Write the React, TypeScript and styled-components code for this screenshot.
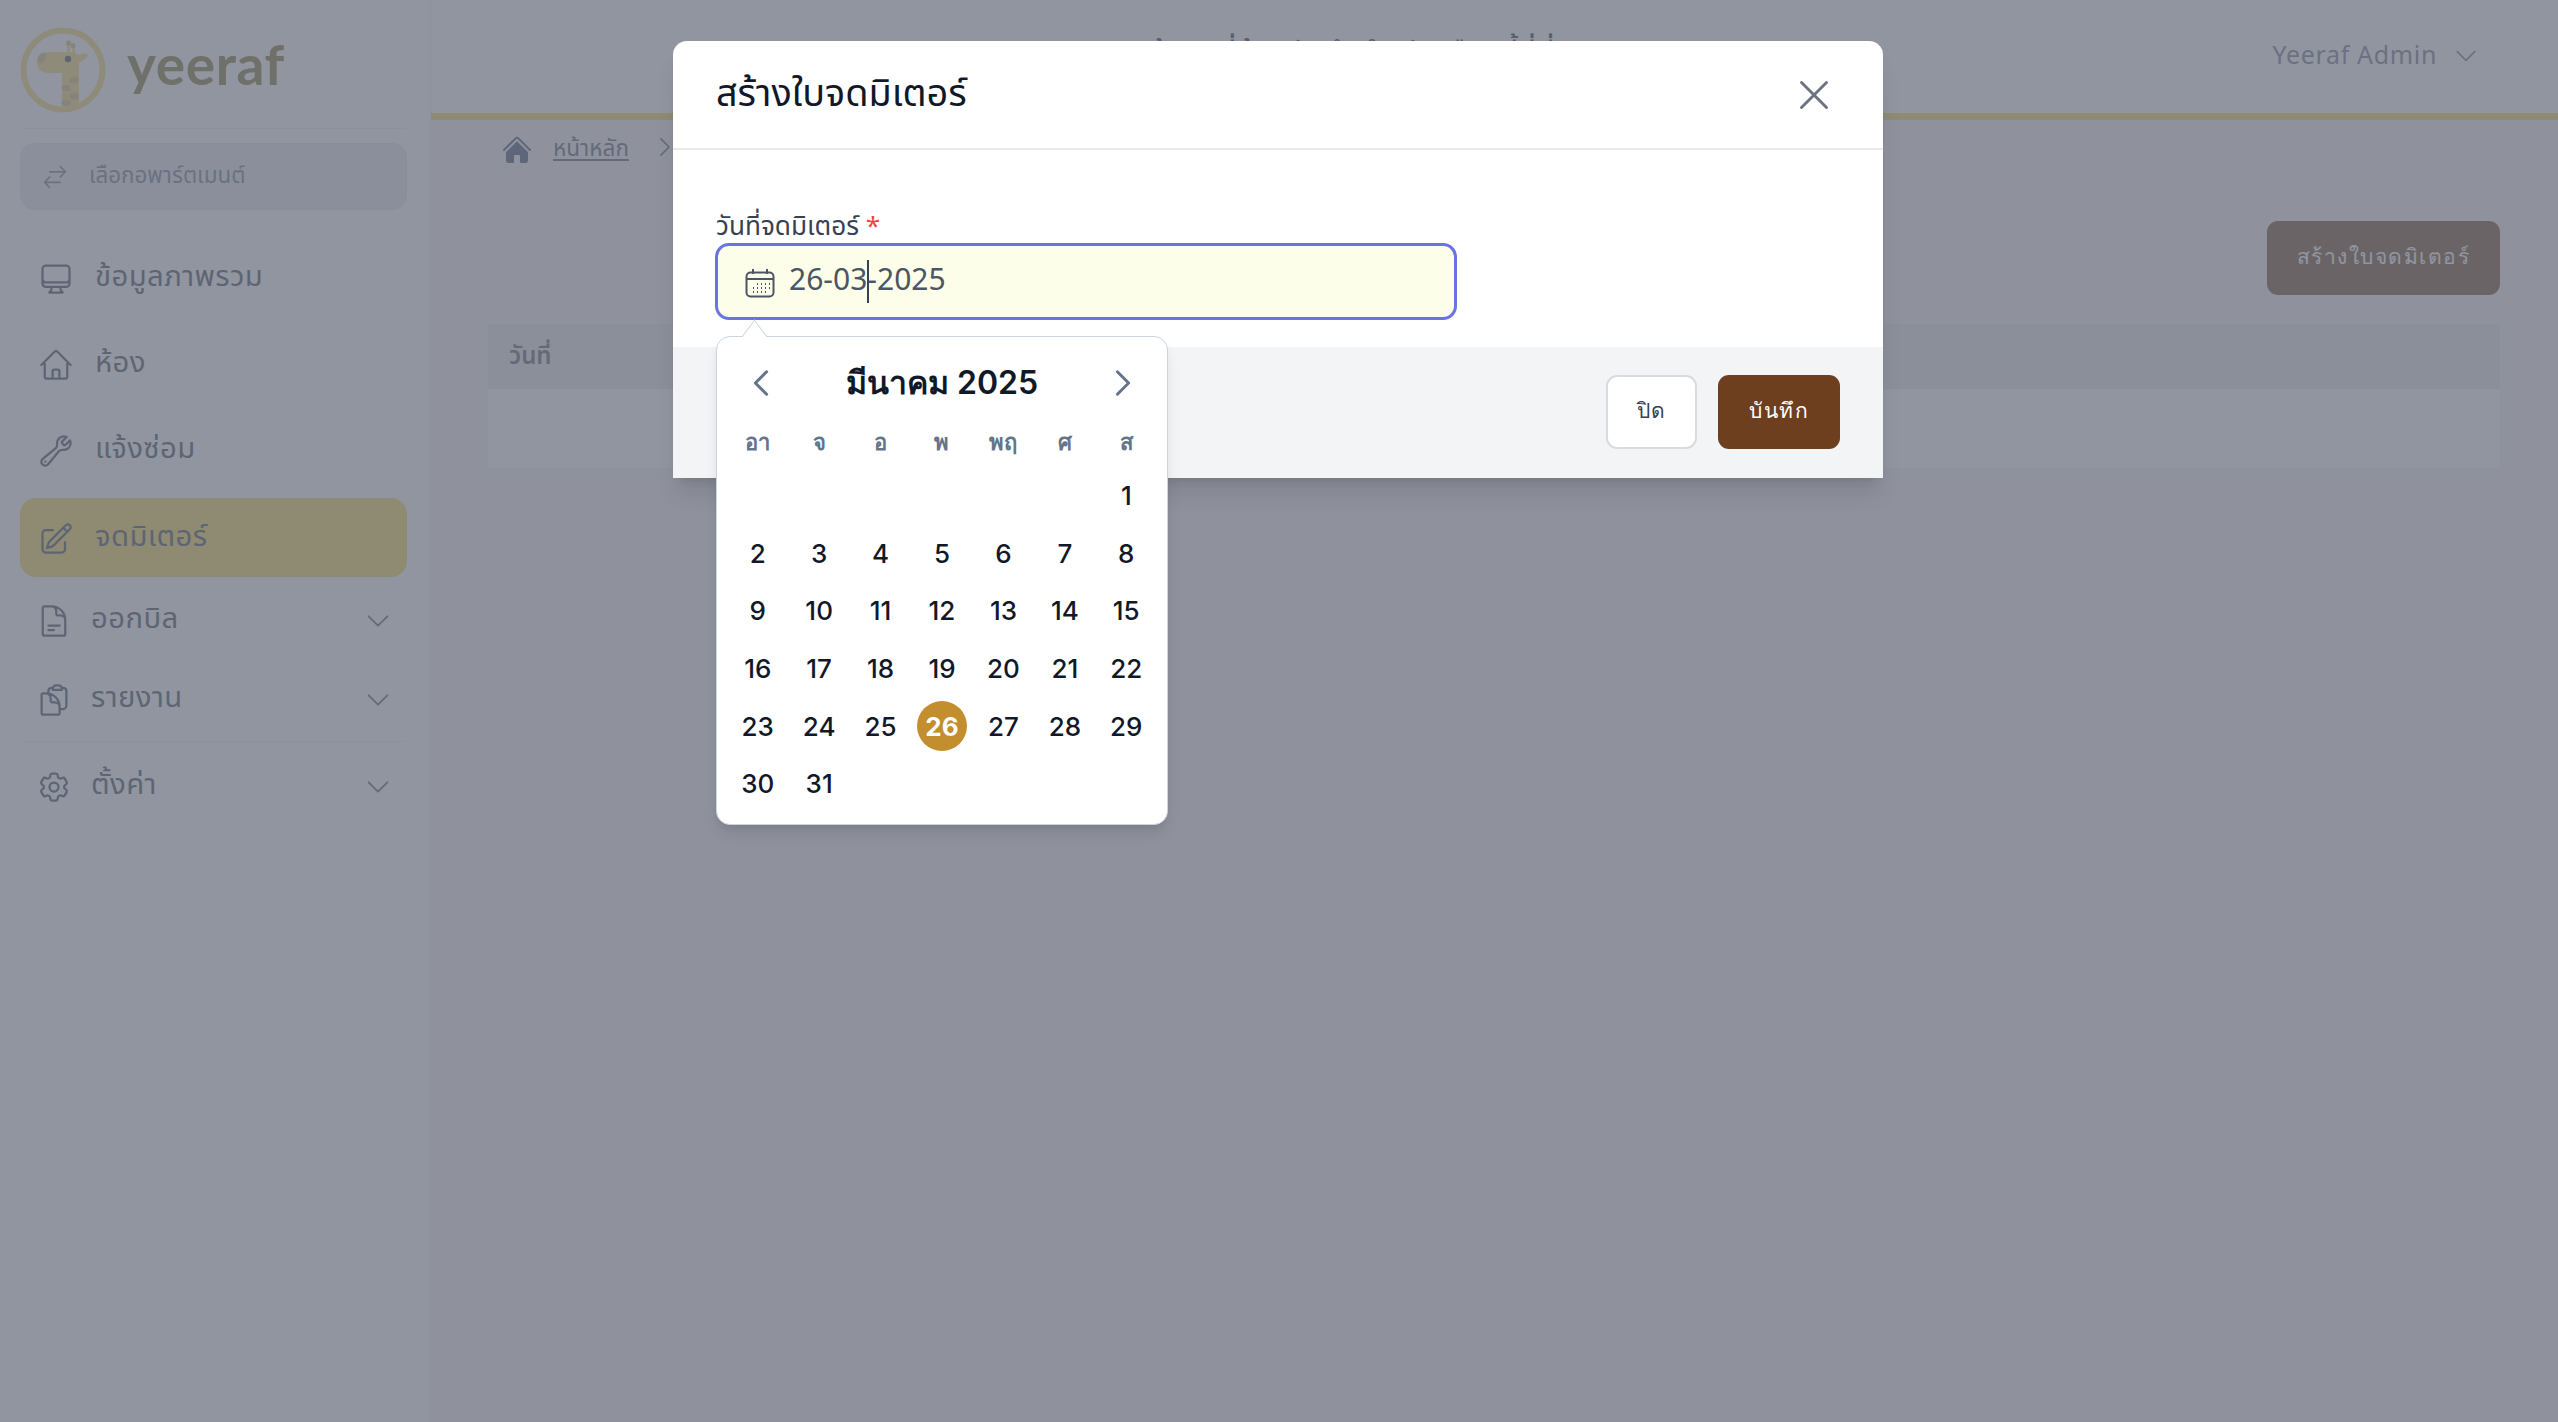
import React from "react";
import styled, { createGlobalStyle } from "styled-components";
import {
  HiOutlineComputerDesktop,
  HiOutlineHome,
  HiOutlineWrench,
  HiOutlinePencilSquare,
  HiOutlineDocumentText,
  HiOutlineClipboardDocument,
  HiOutlineCog6Tooth,
  HiOutlineChevronDown,
  HiOutlineArrowsRightLeft,
  HiHome,
  HiOutlineXMark,
  HiOutlineChevronLeft,
  HiOutlineChevronRight,
} from "react-icons/hi2";

const Global = createGlobalStyle`
  html, body { margin: 0; height: 100%; overflow: hidden; background: #fcf1f3; }
  * { box-sizing: border-box; }
  body { font-family: "Noto Sans", "Noto Sans Thai", sans-serif; color: #374151; }
`;

const Page = styled.div`
  display: flex;
  width: 2558px;
  height: 1422px;
  position: relative;
`;
const Sidebar = styled.aside`
  width: 431px;
  flex: none;
  background: #fff;
  border-right: 1px solid #f1eef0;
  padding: 0 23px 0 20px;
  display: flex;
  flex-direction: column;
`;
const LogoRow = styled.div`
  height: 129px;
  padding-top: 27px;
  display: flex;
  align-items: flex-start;
  gap: 21px;
  border-bottom: 1px solid #eef0f3;
`;
const LogoText = styled.div`
  font-family: "Lato", sans-serif;
  font-weight: 700;
  font-size: 55px;
  line-height: 68px;
  letter-spacing: 0.6px;
  padding-top: 3px;
  color: #7c6c26;
`;
const SelectBox = styled.div`
  margin-top: 14px;
  height: 67px;
  border: 1px solid #dfe2e8;
  border-radius: 14px;
  background: #e6e8ec;
  display: flex;
  align-items: center;
  gap: 20px;
  padding: 0 0 2px 20px;
  font-size: 22.4px;
  color: #6b7280;
  svg { width: 28px; height: 28px; margin-top: 2px; }
`;
const Nav = styled.nav`
  margin-top: 25px;
  display: flex;
  flex-direction: column;
`;
const Item = styled.div<{ $h: number; $mt?: number; $active?: boolean; $gap: number; $pl: number }>`
  height: ${(p) => p.$h}px;
  margin-top: ${(p) => p.$mt ?? 0}px;
  display: flex;
  align-items: center;
  gap: ${(p) => p.$gap}px;
  padding: 0 14px 0 ${(p) => p.$pl}px;
  border-radius: 16px;
  background: ${(p) => (p.$active ? "#fcd248" : "transparent")};
  font-size: 29.3px;
  color: #374151;
  letter-spacing: 0.4px;
  > svg:first-child { width: 36px; height: 36px; flex: none; margin-top: 2px; }
`;
const ItemLabel = styled.span`
  flex: 1;
  line-height: 1;
  position: relative;
  top: -2px;
`;
const Caret = styled(HiOutlineChevronDown)`
  width: 30px;
  height: 30px;
  margin-top: 2px;
  color: #4b5563;
`;
const NavDivider = styled.div`
  height: 1px;
  margin: 3px 0 5px;
  background: #eef0f3;
`;

const Main = styled.div`
  flex: 1;
  display: flex;
  flex-direction: column;
`;
const Header = styled.header`
  height: 120px;
  background: #fff;
  border-bottom: 7px solid #fcd248;
  display: flex;
  justify-content: flex-end;
  padding: 32px 78px 0 0;
  position: relative;
`;
const PeekTitle = styled.div`
  position: absolute;
  left: 720px;
  top: 32px;
  font-size: 27px;
  font-weight: 600;
  letter-spacing: 1px;
  white-space: nowrap;
  color: #1f2937;
`;
const UserMenu = styled.div`
  display: flex;
  align-items: flex-start;
  gap: 15px;
  font-size: 25px;
  line-height: 44px;
  letter-spacing: 0.65px;
  color: #6b7280;
  svg { width: 28px; height: 28px; margin-top: 10px; }
`;
const Crumbs = styled.div`
  height: 56px;
  padding: 12px 0 0 70px;
  display: flex;
  align-items: flex-start;
  gap: 20px;
  font-size: 22.6px;
  line-height: 32px;
  color: #4b5563;
  > svg { width: 32px; height: 32px; margin-top: 2px; color: #374a63; }
`;
const CrumbLink = styled.span`
  text-decoration: underline;
  text-underline-offset: 3px;
`;
const CrumbSep = styled(HiOutlineChevronRight)`
  width: 26px;
  height: 26px !important;
  margin: 5px 0 0 0;
  color: #4b5563 !important;
`;
const Toolbar = styled.div`
  display: flex;
  justify-content: flex-end;
  padding: 45px 58px 0 0;
`;
const PrimaryButton = styled.button`
  width: 233px;
  height: 74px;
  border: 0;
  border-radius: 11px;
  background: #6e3f1e;
  color: #fff;
  font: 500 21px "Noto Sans", sans-serif;
  letter-spacing: 1.5px;
  padding: 0 0 4px;
`;
const TableWrap = styled.div`
  margin: 29px 58px 0 57px;
`;
const TableHead = styled.div`
  height: 65px;
  background: #eae7e1;
  padding: 9px 21px 0;
  font-size: 24px;
  font-weight: 600;
  line-height: 44px;
  color: #4b5563;
`;
const TableRow = styled.div`
  height: 79px;
  background: #fff;
`;

const Overlay = styled.div`
  position: absolute;
  inset: 0;
  background: rgba(107, 114, 128, 0.75);
  display: flex;
  justify-content: center;
  align-items: flex-start;
  padding: 41px 2px 0 0;
`;
const Modal = styled.div`
  width: 1210px;
  height: 437px;
  border-radius: 14px 14px 0 0;
  background: #fff;
  box-shadow: 0 20px 25px -5px rgba(0, 0, 0, 0.1), 0 8px 10px -6px rgba(0, 0, 0, 0.1);
  display: flex;
  flex-direction: column;
`;
const ModalHeader = styled.div`
  height: 109px;
  flex: none;
  border-bottom: 2px solid #e9eaec;
  padding: 0 42px 0 43px;
  display: flex;
  align-items: center;
  justify-content: space-between;
  font-size: 37.8px;
  color: #111827;
  svg { width: 50px; height: 50px; color: #6b7280; margin: 0 2px 0 0; stroke-width: 1.4; }
`;
const ModalBody = styled.div`
  height: 197px;
  flex: none;
  padding: 53px 0 0 42px;
`;
const Field = styled.div`
  width: 742px;
  position: relative;
`;
const Label = styled.label`
  display: block;
  height: 40px;
  padding-left: 1px;
  font-size: 26.2px;
  line-height: 44px;
  color: #374151;
`;
const Star = styled.span`
  color: #ef4444;
`;
const DateInput = styled.div`
  height: 77px;
  border: 3px solid #6a73e6;
  border-radius: 14px;
  background: #fdfeea;
  display: flex;
  align-items: center;
  gap: 14px;
  padding: 0 0 0 27px;
  font-size: 30px;
  color: #4b5563;
  svg { margin-top: 2px; }
`;
const DateText = styled.span`
  position: relative;
  top: -1px;
`;
const TextCaret = styled.span`
  display: inline-block;
  width: 2px;
  height: 43px;
  margin: 0 -2px 0 0;
  background: #374151;
  vertical-align: middle;
`;
const Popover = styled.div`
  position: absolute;
  left: 1px;
  top: 133px;
  width: 452px;
  height: 489px;
  background: #fff;
  border: 1px solid #cbd5e1;
  border-radius: 14px;
  box-shadow: 0 10px 15px -3px rgba(0, 0, 0, 0.1), 0 4px 6px -2px rgba(0, 0, 0, 0.05);
  padding: 0 10px;
  z-index: 2;
  &::before {
    content: "";
    position: absolute;
    left: 27px;
    top: -11px;
    width: 20px;
    height: 20px;
    background: #fff;
    border-left: 1px solid #cbd5e1;
    border-top: 1px solid #cbd5e1;
    transform: rotate(45deg) skew(8deg, 8deg);
  }
`;
const CalHead = styled.div`
  height: 80px;
  padding: 11px 16px 0;
  display: flex;
  align-items: center;
  justify-content: space-between;
  font-family: "Inter", "Noto Sans", sans-serif;
  font-weight: 600;
  font-size: 32px;
  color: #111827;
  svg { width: 36px; height: 36px; color: #64748b; stroke-width: 2; }
`;
const Grid = styled.div`
  display: grid;
  grid-template-columns: repeat(7, 1fr);
  font-family: "Inter", "Noto Sans", sans-serif;
`;
const DayName = styled.div`
  height: 50px;
  display: flex;
  align-items: center;
  justify-content: center;
  font-size: 22px;
  font-weight: 600;
  color: #64748b;
`;
const Day = styled.div`
  height: 57.6px;
  display: flex;
  align-items: center;
  justify-content: center;
  font-size: 26px;
  font-weight: 450;
  color: #111827;
`;
const Selected = styled.span`
  width: 50px;
  height: 50px;
  border-radius: 50%;
  background: #c28e2e;
  color: #fff;
  font-weight: 700;
  display: flex;
  align-items: center;
  justify-content: center;
`;
const ModalFooter = styled.div`
  flex: 1;
  background: #f3f4f6;
  display: flex;
  justify-content: flex-end;
  gap: 21px;
  padding: 28px 43px 0 0;
`;
const FooterButton = styled.button<{ $primary?: boolean }>`
  width: ${(p) => (p.$primary ? 122 : 91)}px;
  height: 74px;
  border-radius: 11px;
  border: ${(p) => (p.$primary ? "0" : "2px solid #d8dbe0")};
  background: ${(p) => (p.$primary ? "#6e3f1e" : "#fff")};
  color: ${(p) => (p.$primary ? "#fff" : "#374151")};
  font: 500 21px "Noto Sans", sans-serif;
  letter-spacing: 1.5px;
  padding: 0 0 3px;
`;

const Logo = () => (
  <svg width="86" height="86" viewBox="0 0 86 86">
    <circle cx="43" cy="43" r="39.5" fill="none" stroke="#f6d66a" strokeWidth="6" />
    <path
      d="M17 35c0-6 5-10 12-10h16c4 0 10 1 14 3 3-1 6-2 9-1 0 3-4 7-9 8v43c-5 2-12 2-17 1V46H29c-7 0-12-4-12-11Z"
      fill="#f6d66a"
    />
    <path d="M49 26l-1-9M54 27l-1-8" stroke="#f6d66a" strokeWidth="2.5" />
    <circle cx="48.5" cy="16" r="2.6" fill="#d9b46f" />
    <circle cx="53" cy="18.5" r="2.6" fill="#d9b46f" />
    <ellipse cx="22" cy="31" rx="3.8" ry="5.8" transform="rotate(28 22 31)" fill="#d9b46f" />
    <circle cx="48" cy="32" r="3.2" fill="#374151" />
    <ellipse cx="54" cy="53" rx="4.6" ry="3.3" transform="rotate(-10 54 53)" fill="#d9b46f" />
    <ellipse cx="46" cy="61" rx="4.6" ry="3.3" transform="rotate(10 46 61)" fill="#d9b46f" />
    <ellipse cx="54" cy="69" rx="4.6" ry="3.3" transform="rotate(-10 54 69)" fill="#d9b46f" />
    <ellipse cx="46" cy="76" rx="4.8" ry="3.3" fill="#d9b46f" />
  </svg>
);

const CalendarIcon = () => (
  <svg width="30" height="30" viewBox="0 0 30 30" fill="none" stroke="#4b5563" strokeWidth="2">
    <rect x="1.5" y="4.5" width="27" height="24" rx="4" />
    <path d="M1.5 11h27M8 1v5M22 1v5" />
    <path
      d="M12 16h1M16 16h1M20 16h1M24 16h1M8 20h1M12 20h1M16 20h1M20 20h1M24 20h1M8 24h1M12 24h1M16 24h1M20 24h1"
      strokeWidth="1.8"
    />
  </svg>
);

const dayNames = ["อา", "จ", "อ", "พ", "พฤ", "ศ", "ส"];
const blanks = Array.from({ length: 6 });
const days = Array.from({ length: 31 }, (_, i) => i + 1);

export default function App() {
  return (
    <Page>
      <Global />
      <Sidebar>
        <LogoRow>
          <Logo />
          <LogoText>yeeraf</LogoText>
        </LogoRow>
        <SelectBox>
          <HiOutlineArrowsRightLeft />
          เลือกอพาร์ตเมนต์
        </SelectBox>
        <Nav>
          <Item $h={86} $gap={21} $pl={18}>
            <HiOutlineComputerDesktop />
            <ItemLabel>ข้อมูลภาพรวม</ItemLabel>
          </Item>
          <Item $h={86} $gap={21} $pl={18}>
            <HiOutlineHome />
            <ItemLabel>ห้อง</ItemLabel>
          </Item>
          <Item $h={86} $gap={21} $pl={18}>
            <HiOutlineWrench />
            <ItemLabel>แจ้งซ่อม</ItemLabel>
          </Item>
          <Item $h={79} $mt={5} $gap={21} $pl={18} $active>
            <HiOutlinePencilSquare />
            <ItemLabel>จดมิเตอร์</ItemLabel>
          </Item>
          <Item $h={78} $mt={4} $gap={19} $pl={16}>
            <HiOutlineDocumentText />
            <ItemLabel>ออกบิล</ItemLabel>
            <Caret />
          </Item>
          <Item $h={78} $mt={1} $gap={19} $pl={16}>
            <HiOutlineClipboardDocument />
            <ItemLabel>รายงาน</ItemLabel>
            <Caret />
          </Item>
          <NavDivider />
          <Item $h={78} $gap={19} $pl={16}>
            <HiOutlineCog6Tooth />
            <ItemLabel>ตั้งค่า</ItemLabel>
            <Caret />
          </Item>
        </Nav>
      </Sidebar>
      <Main>
        <Header>
          <PeekTitle>ข้อมูลที่ต้องบันทึกสำหรับเดือนนี้ที่นี่</PeekTitle>
          <UserMenu>
            Yeeraf Admin
            <HiOutlineChevronDown />
          </UserMenu>
        </Header>
        <Crumbs>
          <HiHome />
          <CrumbLink>หน้าหลัก</CrumbLink>
          <CrumbSep />
        </Crumbs>
        <Toolbar>
          <PrimaryButton>สร้างใบจดมิเตอร์</PrimaryButton>
        </Toolbar>
        <TableWrap>
          <TableHead>วันที่</TableHead>
          <TableRow />
        </TableWrap>
      </Main>
      <Overlay>
        <Modal>
          <ModalHeader>
            สร้างใบจดมิเตอร์
            <HiOutlineXMark />
          </ModalHeader>
          <ModalBody>
            <Field>
              <Label>
                วันที่จดมิเตอร์ <Star>*</Star>
              </Label>
              <DateInput>
                <CalendarIcon />
                <DateText>
                  26-03
                  <TextCaret />
                  -2025
                </DateText>
              </DateInput>
              <Popover>
                <CalHead>
                  <HiOutlineChevronLeft />
                  มีนาคม 2025
                  <HiOutlineChevronRight />
                </CalHead>
                <Grid>
                  {dayNames.map((d) => (
                    <DayName key={d}>{d}</DayName>
                  ))}
                  {blanks.map((_, i) => (
                    <Day key={`b${i}`} />
                  ))}
                  {days.map((d) => (
                    <Day key={d}>{d === 26 ? <Selected>{d}</Selected> : d}</Day>
                  ))}
                </Grid>
              </Popover>
            </Field>
          </ModalBody>
          <ModalFooter>
            <FooterButton>ปิด</FooterButton>
            <FooterButton $primary>บันทึก</FooterButton>
          </ModalFooter>
        </Modal>
      </Overlay>
    </Page>
  );
}
